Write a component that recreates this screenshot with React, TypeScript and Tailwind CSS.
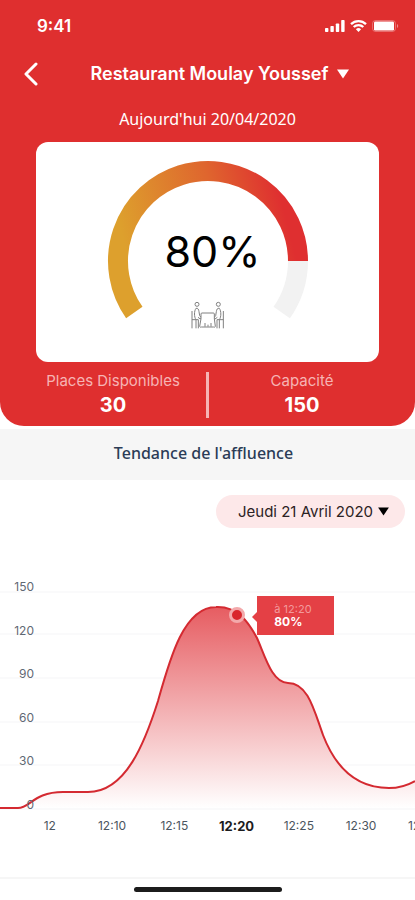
import { useId } from 'react';

const GRID_LINES = [20, 62, 106, 150, 193, 237];
const Y_LABELS = ['150', '120', '90', '60', '30', '0'];
const X_LABELS = ['12', '12:10', '12:15', '12:20', '12:25', '12:30', '12:35'];
const ACTIVE_TIME = '12:20';

const CURVE =
  'M0 236 H18 C30 236 34 220 63 220 H88 C126 220 145 170 158 129 C170 86 184 35 216 35 C238 34 249 51 257 66 C265 84 272 111 288 111 C308 111 314 138 323 163 C338 202 362 216 389 216 C399 216 408 213 415 209';

function Caret({ className }: { className: string }) {
  return (
    <svg viewBox="0 0 12 10" className={className} fill="currentColor" aria-hidden="true">
      <path d="M0 0.5h12L6 9.5z" />
    </svg>
  );
}

function StatusBar() {
  return (
    <div className="flex h-[52px] items-center justify-between pl-[37px] pr-4">
      <span className="text-[17px] font-semibold leading-5">9:41</span>
      <div className="flex items-center gap-[5px]">
        <svg viewBox="0 0 20 12" className="h-3 w-5" fill="currentColor" aria-hidden="true">
          <rect x="0" y="8" width="3.4" height="4" rx="0.8" />
          <rect x="5.4" y="6" width="3.4" height="6" rx="0.8" />
          <rect x="10.8" y="3.4" width="3.4" height="8.6" rx="0.8" />
          <rect x="16.2" y="0" width="3.4" height="12" rx="0.8" />
        </svg>
        <svg viewBox="0 0 17 12" className="h-3 w-[17px]" fill="none" stroke="currentColor" strokeWidth="2.3" aria-hidden="true">
          <path d="M1 4.2a10.8 10.8 0 0 1 15 0" />
          <path d="M3.7 7a6.9 6.9 0 0 1 9.6 0" />
          <path d="M8.5 12 5.9 9.3a3.8 3.8 0 0 1 5.2 0z" fill="currentColor" stroke="none" />
        </svg>
        <svg viewBox="0 0 27 12" className="h-3 w-[27px]" aria-hidden="true">
          <rect x="0.5" y="0.5" width="23" height="11" rx="3" fill="none" stroke="currentColor" strokeOpacity="0.3" />
          <rect x="2" y="1.5" width="20" height="9" rx="1.2" fill="currentColor" />
          <path d="M25 4v4c1.6-.8 1.6-3.2 0-4z" fill="currentColor" fillOpacity="0.45" />
        </svg>
      </div>
    </div>
  );
}

function TableIcon() {
  return (
    <svg
      viewBox="60 36 99 84"
      className="h-7 w-[33px] text-[#808080]"
      fill="none"
      stroke="currentColor"
      strokeWidth="3"
      strokeLinejoin="round"
      aria-hidden="true"
    >
      <circle cx="78" cy="46" r="6" />
      <path d="M75 58c-6 8-6 26 0 34h7v26M75 58c6-2 8 4 9 10l2 12 5 6-3 4-7-5M63 66v52M63 92h12v26" />
      <circle cx="142" cy="46" r="6" />
      <path d="M145 58c6 8 6 26 0 34h-7v26M145 58c-6-2-8 4-9 10l-2 12-5 6 3 4 7-5M157 66v52M157 92h-12v26" />
      <path d="M93 72h34c2 0 3 1 3 3v14l3 23c-1 3-3 3-5 2H91c-2 1-4 1-5-2l4-23V75c0-2 1-3 3-3zM102 113v-11M111 113v-6M120 113v-11" fill="#fff" />
    </svg>
  );
}

function Gauge() {
  const id = useId();
  return (
    <div className="grid justify-items-center rounded-xl bg-white pt-[18px] text-black">
      <svg viewBox="0 0 202 202" className="col-start-1 row-start-1 w-[202px]" fill="none" strokeWidth="20" aria-hidden="true">
        <defs>
          <linearGradient id={id} gradientUnits="userSpaceOnUse" x1="24" y1="110" x2="182" y2="70">
            <stop offset="0" stopColor="#dda02d" />
            <stop offset="0.6" stopColor="#df652e" />
            <stop offset="1" stopColor="#df2f30" />
          </linearGradient>
        </defs>
        <path d="M191 101A90 90 0 0 1 174.700 152.600" stroke="#f2f2f2" />
        <path d="M27.300 152.600A90 90 0 1 1 191 101" stroke={`url(#${id})`} />
      </svg>
      <div className="col-start-1 row-start-1 flex flex-col items-center pt-[65px]">
        <p className="pl-2.5 text-[43px] leading-[52px]">80%</p>
        <div className="pt-6">
          <TableIcon />
        </div>
      </div>
    </div>
  );
}

function Stat({ label, value }: { label: string; value: string }) {
  return (
    <div className="flex-1 text-center">
      <p className="text-[15px] leading-5 text-[#f6b4b4]">{label}</p>
      <p className="text-xl font-bold leading-7">{value}</p>
    </div>
  );
}

function TrendChart() {
  const id = useId();
  return (
    <div className="overflow-hidden">
      <div className="relative grid h-60">
        <svg
          viewBox="0 0 415 240"
          preserveAspectRatio="none"
          className="col-start-1 row-start-1 h-60 w-full"
          fill="none"
          role="img"
          aria-label="Tendance de l'affluence"
        >
          <defs>
            <linearGradient id={id} gradientUnits="userSpaceOnUse" x1="0" y1="35" x2="0" y2="236">
              <stop offset="0" stopColor="#e0343a" stopOpacity="0.8" />
              <stop offset="1" stopColor="#e0343a" stopOpacity="0" />
            </linearGradient>
          </defs>
          {GRID_LINES.map((y) => (
            <path key={y} d={`M0 ${y}H415`} stroke="#f5f5f7" />
          ))}
          <path d={`${CURVE} V236 H0z`} fill="#fff" />
          <path d={`${CURVE} V236 H0z`} fill={`url(#${id})`} />
          <path d={CURVE} stroke="#d42a31" strokeWidth="2" vectorEffect="non-scaling-stroke" />
        </svg>
        <div className="col-start-1 row-start-1 mt-[9px] flex h-[230px] w-[34px] flex-col justify-between text-right text-xs leading-3 text-[#5f6873]">
          {Y_LABELS.map((label) => (
            <span key={label}>{label}</span>
          ))}
        </div>
        <span className="absolute left-[57%] top-[35px] size-4 -translate-x-1/2 rounded-full border-[3px] border-[#f3a9ab] bg-[#d9262c]" />
        <div className="absolute left-[62%] top-6 flex h-[39px] w-[77px] flex-col justify-center bg-[#e44045] pl-[17px] text-white">
          <span className="absolute right-full top-4 border-y-[5px] border-r-[5px] border-y-transparent border-r-[#e44045]" />
          <span className="text-[11px] leading-3 text-[#f39a9c]">à 12:20</span>
          <span className="text-xs font-bold leading-[14px]">80%</span>
        </div>
      </div>
      <div className="flex pt-1">
        <span className="shrink-0 basis-[4.5%]" />
        {X_LABELS.map((label) => (
          <span
            key={label}
            className={
              label === ACTIVE_TIME
                ? 'shrink-0 basis-[15%] text-center text-[13px] font-bold leading-5 text-[#1c1c1e]'
                : 'shrink-0 basis-[15%] text-center text-xs leading-5 text-[#4b5560]'
            }
          >
            {label}
          </span>
        ))}
      </div>
    </div>
  );
}

export default function App() {
  return (
    <div className="flex min-h-screen flex-col bg-white font-['Inter',sans-serif]">
      <header className="rounded-b-3xl bg-[#df2f2f] pb-[7px] text-white">
        <StatusBar />
        <div className="flex h-11 items-center pl-5">
          <button type="button" aria-label="Retour" className="p-1">
            <svg viewBox="0 0 14 24" className="h-6 w-3.5" fill="none" stroke="currentColor" strokeWidth="3" strokeLinecap="round" strokeLinejoin="round">
              <path d="M12 2 2 12l10 10" />
            </svg>
          </button>
          <div className="flex flex-1 items-center justify-center gap-2 pr-8 pl-3.5">
            <select aria-label="Restaurant" className="appearance-none bg-transparent text-lg font-semibold leading-6">
              <option>Restaurant Moulay Youssef</option>
            </select>
            <Caret className="h-2.5 w-3" />
          </div>
        </div>
        <p className="pt-3 text-center font-['Noto_Sans',sans-serif] text-base leading-[22px]">
          Aujourd'hui 20/04/2020
        </p>
        <div className="px-9 pt-3">
          <Gauge />
        </div>
        <div className="flex items-center px-5 pt-[9px]">
          <Stat label="Places Disponibles" value="30" />
          <span className="h-[46px] w-[3px] bg-[#f6b4b4]" />
          <Stat label="Capacité" value="150" />
        </div>
      </header>

      <h2 className="mt-[3px] bg-[#f6f6f6] pb-[3px] pr-2 text-center font-['Noto_Sans',sans-serif] text-base font-medium leading-[48px] text-[#2b3c56]">
        Tendance de l'affluence
      </h2>

      <div className="flex justify-end px-2.5 pt-[15px]">
        <div className="flex h-[33px] items-center gap-1 rounded-full bg-[#fde8e9] pl-[22px] pr-4 text-[#2c2224]">
          <select aria-label="Date" className="appearance-none bg-transparent text-[15px] leading-5">
            <option>Jeudi 21 Avril 2020</option>
          </select>
          <Caret className="h-[9px] w-[11px] text-black" />
        </div>
      </div>

      <main className="flex-1 pt-11">
        <TrendChart />
      </main>

      <footer className="flex h-[23px] items-center justify-center border-t-2 border-[#f6f6f6]">
        <span className="h-[5px] w-[148px] rounded-full bg-[#1c1c1c]" />
      </footer>
    </div>
  );
}
